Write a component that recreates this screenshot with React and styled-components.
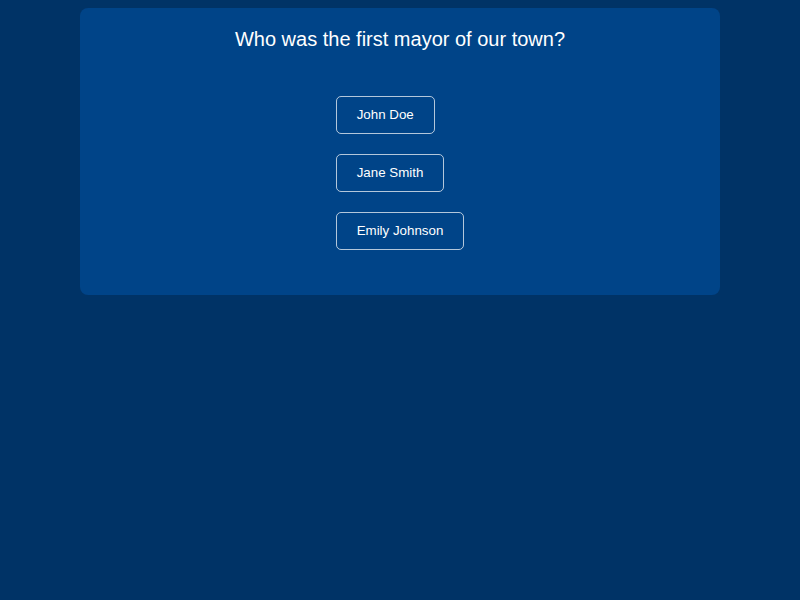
import React from "react"
import styled, { createGlobalStyle } from "styled-components"

const options = ["John Doe", "Jane Smith", "Emily Johnson"]

const App = () => {
  return (
    <>
      <GlobalStyle />
      <Page>
        <Card>
          <Question>Who was the first mayor of our town?</Question>
          <Options>
            {options.map(option => (
              <Option key={option} type="button">
                {option}
              </Option>
            ))}
          </Options>
        </Card>
      </Page>
    </>
  )
}

export default App

const GlobalStyle = createGlobalStyle`
  html, body {
    margin: 0;
    padding: 0;
    background: #003366;
    font-family: "Liberation Sans", Arial, sans-serif;
  }
`

const Page = styled.main`
  min-height: 100vh;
  padding-top: 8px;
  box-sizing: border-box;
  display: flex;
  flex-direction: column;
  align-items: center;
`

const Card = styled.section`
  width: 640px;
  box-sizing: border-box;
  padding: 20px;
  background: #004488;
  border-radius: 8px;
  display: flex;
  flex-direction: column;
  align-items: center;
`

const Question = styled.h2`
  margin: 0;
  font-size: 20px;
  font-weight: normal;
  color: #ffffff;
  line-height: 23px;
`

const Options = styled.div`
  display: flex;
  flex-direction: column;
  align-items: flex-start;
  gap: 20px;
  padding: 45px 0 25px;
`

const Option = styled.button`
  padding: 10px 20px;
  font-family: "Liberation Sans", Arial, sans-serif;
  font-size: 13.333px;
  line-height: 16px;
  color: #ffffff;
  background: transparent;
  border: 1px solid rgba(255, 255, 255, 0.7);
  border-radius: 5px;
  cursor: pointer;
`
